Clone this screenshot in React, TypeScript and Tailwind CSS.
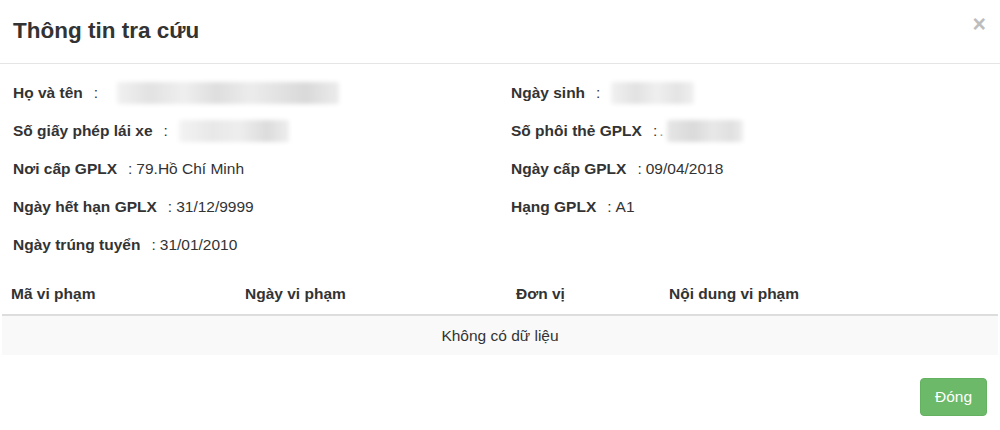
const font = { fontFamily: '"Liberation Sans", Arial, sans-serif' };

type Info = { label: string; value?: string; blur?: { w: number; ml: number; bg: string }; dot?: boolean };

const left: Info[] = [
  { label: 'Họ và tên', blur: { w: 222, ml: 19, bg: 'bg-[linear-gradient(90deg,#f1f1f1,#e2e2e2_15%,#efefef_30%,#dedede_45%,#ececec_60%,#d9d9d9_85%,#ececec)]' } },
  { label: 'Số giấy phép lái xe', blur: { w: 110, ml: 11, bg: 'bg-[linear-gradient(90deg,#f3f3f3,#e8e8e8_30%,#eeeeee_55%,#dcdcdc_80%,#eeeeee)]' } },
  { label: 'Nơi cấp GPLX', value: '79.Hồ Chí Minh' },
  { label: 'Ngày hết hạn GPLX', value: '31/12/9999' },
  { label: 'Ngày trúng tuyển', value: '31/01/2010' },
];

const right: Info[] = [
  { label: 'Ngày sinh', blur: { w: 83, ml: 11, bg: 'bg-[linear-gradient(90deg,#f1f1f1,#e2e2e2_30%,#efefef_55%,#e4e4e4_80%,#f0f0f0)]' } },
  { label: 'Số phôi thẻ GPLX', dot: true, blur: { w: 76, ml: 3, bg: 'bg-[linear-gradient(90deg,#e6e6e6,#dadada_35%,#e8e8e8_60%,#e0e0e0_85%,#eeeeee)]' } },
  { label: 'Ngày cấp GPLX', value: '09/04/2018' },
  { label: 'Hạng GPLX', value: 'A1' },
];

function Row({ item }: { item: Info }) {
  return (
    <div className="flex h-[38px] items-center text-[15.5px] text-[#333]">
      <span className="font-bold">{item.label}</span>
      <span className="ml-[11px]">:</span>
      {item.dot && <span className="ml-[2px] text-[#999]">.</span>}
      {item.value && <span className="ml-[4px]">{item.value}</span>}
      {item.blur && (
        <span
          className={`h-[22px] rounded-[2px] blur-[2px] ${item.blur.bg}`}
          style={{ width: item.blur.w, marginLeft: item.blur.ml }}
        />
      )}
    </div>
  );
}

export default function App() {
  return (
    <div className="h-[430px] w-[1000px] overflow-hidden bg-white text-[#333]" style={font}>
      <div className="flex h-[64px] items-center justify-between border-b border-[#e5e5e5] pl-[13px] pr-[14px]">
        <h4 className="text-[22.5px] font-bold leading-none text-[#333]">Thông tin tra cứu</h4>
        <button className="mb-[14px] text-[23px] font-bold leading-none text-[#bdbdbd]">×</button>
      </div>

      <div className="grid grid-cols-[498px_1fr] pl-[13px] pt-[10px]">
        <div>
          {left.map((r) => (
            <Row key={r.label} item={r} />
          ))}
        </div>
        <div>
          {right.map((r) => (
            <Row key={r.label} item={r} />
          ))}
        </div>
      </div>

      <div className="mt-[10px] px-[2px]">
        <table className="w-full table-fixed border-collapse text-[15.5px] text-[#333]">
          <thead>
            <tr className="h-[41px] border-b-2 border-[#dddddd] text-left">
              <th className="w-[235px] pl-[9px] font-bold">Mã vi phạm</th>
              <th className="w-[271px] pl-[8px] font-bold">Ngày vi phạm</th>
              <th className="w-[153px] pl-[8px] font-bold">Đơn vị</th>
              <th className="pl-[8px] font-bold">Nội dung vi phạm</th>
            </tr>
          </thead>
          <tbody>
            <tr className="h-[40px] bg-[#f9f9f9]">
              <td colSpan={4} className="text-center">
                Không có dữ liệu
              </td>
            </tr>
          </tbody>
        </table>
      </div>

      <div className="flex justify-end pr-[13px] pt-[23px]">
        <button className="h-[38px] w-[67px] rounded-[4px] border border-[#64b162] bg-[#6cb96a] text-[15.5px] text-white">
          Đóng
        </button>
      </div>
    </div>
  );
}
